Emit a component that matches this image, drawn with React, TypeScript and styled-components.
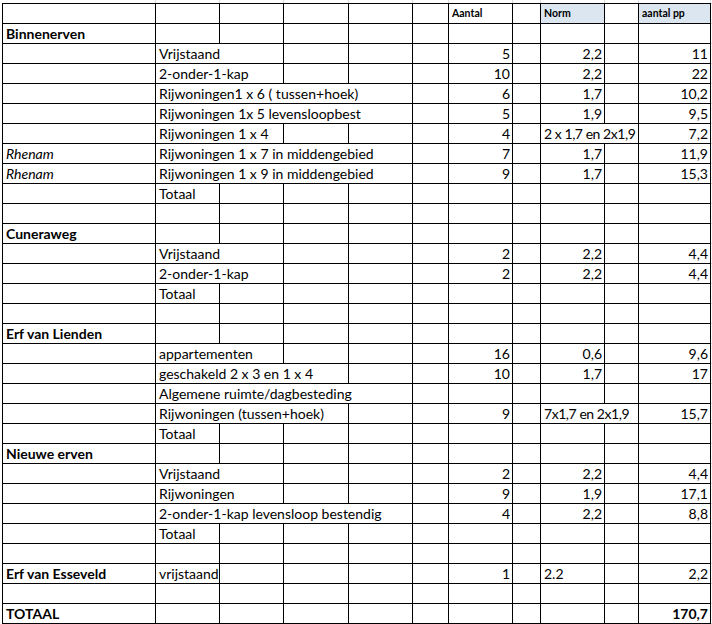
import styled, { createGlobalStyle } from "styled-components";

const GlobalStyle = createGlobalStyle`
    html, body {
        margin: 0;
        padding: 0;
        background: #ffffff;
    }
    body {
        font-family: Lato, "Liberation Sans", sans-serif;
        color: #000000;
    }
`;

// column widths, right border included (Excel A..K) + the spill past the sheet
const COLUMNS = "153px 64px 64px 65px 64px 36px 64px 28px 64px 34px 72px 1fr";

type CellData = {
    text?: string;
    span?: number;
    align?: "left" | "right";
    bold?: boolean;
    italic?: boolean;
    head?: boolean;
    tint?: boolean;
    tight?: boolean;
};

const e = (span = 1): CellData => ({ span });
const num = (text: string, bold = false): CellData => ({ text, align: "right", bold });
const formula = (text: string): CellData => ({ text, span: 2, tight: true });

// a row with a label in B, Aantal, Norm, aantal pp
const line = (label: string, labelSpan: number, aantal: string, norm: CellData, pp: string, first: CellData = e()): CellData[] => {
    const cells: CellData[] = [first, { text: label, span: labelSpan }];
    for (let i = labelSpan; i < 4; i++) cells.push(e());
    cells.push(e(), num(aantal), e());
    if ((norm.span || 1) === 2) cells.push(norm);
    else cells.push(norm, e());
    cells.push(num(pp));
    return cells;
};

const empty = (): CellData[] => Array.from({ length: 11 }, () => e());
const section = (name: string): CellData[] => [{ text: name, bold: true }, ...Array.from({ length: 10 }, () => e())];
const totaal = (): CellData[] => [e(), { text: "Totaal" }, ...Array.from({ length: 9 }, () => e())];
const wide = (label: string): CellData[] => [e(), { text: label, span: 4 }, ...Array.from({ length: 6 }, () => e())];

const rhenam: CellData = { text: "Rhenam", italic: true };

const rows: CellData[][] = [
    [e(), e(), e(), e(), e(), e(), { text: "Aantal", head: true }, e(), { text: "Norm", head: true, tint: true }, e(), { text: "aantal pp", head: true, tint: true }],
    section("Binnenerven"),
    line("Vrijstaand", 2, "5", num("2,2"), "11"),
    line("2-onder-1-kap", 2, "10", num("2,2"), "22"),
    line("Rijwoningen1 x 6 ( tussen+hoek)", 4, "6", num("1,7"), "10,2"),
    line("Rijwoningen 1x 5 levensloopbest", 4, "5", num("1,9"), "9,5"),
    line("Rijwoningen 1 x 4", 2, "4", formula("2 x 1,7 en 2x1,9"), "7,2"),
    line("Rijwoningen 1 x 7 in middengebied", 4, "7", num("1,7"), "11,9", rhenam),
    line("Rijwoningen 1 x 9 in middengebied", 4, "9", num("1,7"), "15,3", rhenam),
    totaal(),
    empty(),
    section("Cuneraweg"),
    line("Vrijstaand", 2, "2", num("2,2"), "4,4"),
    line("2-onder-1-kap", 2, "2", num("2,2"), "4,4"),
    totaal(),
    empty(),
    section("Erf van Lienden"),
    line("appartementen", 2, "16", num("0,6"), "9,6"),
    line("geschakeld 2 x 3 en 1 x 4", 3, "10", num("1,7"), "17"),
    wide("Algemene ruimte/dagbesteding"),
    line("Rijwoningen (tussen+hoek)", 3, "9", formula("7x1,7 en 2x1,9"), "15,7"),
    totaal(),
    section("Nieuwe erven"),
    line("Vrijstaand", 2, "2", num("2,2"), "4,4"),
    line("Rijwoningen", 2, "9", num("1,9"), "17,1"),
    line("2-onder-1-kap levensloop bestendig", 4, "4", num("2,2"), "8,8"),
    totaal(),
    empty(),
    line("vrijstaand", 1, "1", { text: "2.2" }, "2,2", { text: "Erf van Esseveld", bold: true }),
    empty(),
    [{ text: "TOTAAL", bold: true }, ...Array.from({ length: 9 }, () => e()), num("170,7", true)],
];

const App = () => {
    return (
        <>
            <GlobalStyle />
            <Strip>
                {Array.from({ length: 11 }, (_, i) => <StripCell key={i} />)}
            </Strip>
            <Sheet>
                {rows.map((row, r) => (
                    <Row key={r}>
                        {row.map((cell, c) => (
                            <Cell
                                key={c}
                                $span={cell.span || 1}
                                $align={cell.align || "left"}
                                $bold={!!cell.bold || !!cell.head}
                                $italic={!!cell.italic}
                                $head={!!cell.head}
                                $tint={!!cell.tint}
                                $tight={!!cell.tight}
                                $top={r === 0}
                            >
                                {cell.text}
                            </Cell>
                        ))}
                        <Spill $top={r === 0} />
                    </Row>
                ))}
            </Sheet>
        </>
    );
};

const Strip = styled.div`
    display: grid;
    grid-template-columns: ${COLUMNS};
    height: 3px;
    margin-left: 3px;
`;

const StripCell = styled.div`
    border-right: 1px solid #d9d9d9;
`;

const Sheet = styled.div`
    margin-left: 2px;
    border-left: 1px solid #000000;
`;

const Row = styled.div`
    display: grid;
    grid-template-columns: ${COLUMNS};
`;

const Cell = styled.div<{ $span: number; $align: string; $bold: boolean; $italic: boolean; $head: boolean; $tint: boolean; $tight: boolean; $top: boolean }>`
    grid-column: span ${(p) => p.$span};
    box-sizing: border-box;
    height: ${(p) => (p.$top ? 21 : 20)}px;
    border-right: 1px solid #000000;
    border-bottom: 1px solid #000000;
    border-top: ${(p) => (p.$top ? "1px solid #000000" : "none")};
    padding: 0 2px 0 3px;
    background: ${(p) => (p.$tint ? "#dce6f1" : "transparent")};
    font-size: ${(p) => (p.$head ? "10.5px" : "14px")};
    font-weight: ${(p) => (p.$bold ? 700 : 400)};
    font-style: ${(p) => (p.$italic ? "italic" : "normal")};
    letter-spacing: ${(p) => (p.$tight ? "-0.45px" : "0")};
    line-height: 19px;
    text-align: ${(p) => p.$align};
    white-space: nowrap;
    overflow: hidden;
`;

const Spill = styled.div<{ $top: boolean }>`
    border-bottom: 1px solid #d9d9d9;
    border-top: ${(p) => (p.$top ? "1px solid #d9d9d9" : "none")};
`;

export default App;
